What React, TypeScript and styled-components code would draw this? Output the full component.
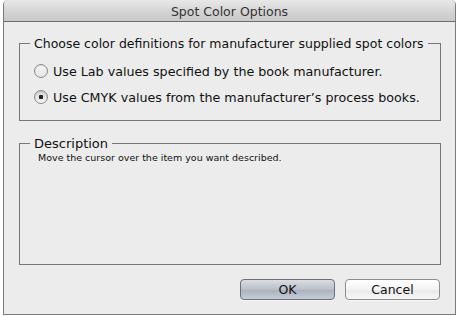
import React from 'react'
import styled, { createGlobalStyle } from 'styled-components'

const GlobalStyle = createGlobalStyle`
  html, body {
    margin: 0;
    padding: 0;
    background: #ffffff;
  }
  body {
    font-family: "DejaVu Sans", "Liberation Sans", sans-serif;
  }
`

const Window = styled.div`
  box-sizing: border-box;
  margin-left: 3px;
  width: 453px;
  height: 315px;
  border: 1px solid #7b7b7b;
  border-top: none;
  border-radius: 5px 5px 0 0;
  background: #ececec;
  display: flex;
  flex-direction: column;
  overflow: hidden;
`

const TitleBar = styled.div`
  height: 22px;
  flex: none;
  box-sizing: border-box;
  border-bottom: 1px solid #6e6e6e;
  background: linear-gradient(#e8e8e8, #d3d3d3 60%, #c9c9c9);
  display: flex;
  align-items: center;
  justify-content: center;
  font-size: 12.5px;
  color: #333333;
  padding-top: 1px;
`

const Body = styled.div`
  flex: 1;
  display: flex;
  flex-direction: column;
  padding: 14px 15px 0 15px;
`

const Group = styled.fieldset<{ $height: number; $top?: number }>`
  box-sizing: border-box;
  margin: 0;
  min-width: 0;
  width: 422px;
  height: ${p => p.$height}px;
  border: 1px solid #777777;
  padding: ${p => p.$top ?? 0}px 0 0 14px;
`

const Legend = styled.legend<{ $size: number }>`
  margin-left: -4px;
  padding: 0 4px;
  white-space: nowrap;
  font-size: ${p => p.$size}px;
  color: #111111;
`

const RadioRow = styled.label`
  display: flex;
  align-items: center;
  gap: 5px;
  height: 26px;
  font-size: 12.7px;
  color: #111111;
`

const RadioCircle = styled.span<{ $checked?: boolean }>`
  box-sizing: border-box;
  width: 14px;
  height: 14px;
  border-radius: 50%;
  border: 1px solid #8a8a8a;
  background: ${p =>
    p.$checked
      ? 'radial-gradient(circle at 50% 50%, #222 0 2px, transparent 2.5px), linear-gradient(#d6d6d6, #f4f4f4)'
      : 'linear-gradient(#f8f8f8, #e4e4e4)'};
  box-shadow: inset 0 1px 1px rgba(0, 0, 0, 0.12);
  flex: none;
`

const Gap = styled.div<{ $h: number }>`
  height: ${p => p.$h}px;
  flex: none;
`

const DescText = styled.div`
  font-size: 9.5px;
  color: #111111;
  margin: 1px 0 0 4px;
`

const Footer = styled.div`
  display: flex;
  justify-content: flex-end;
  gap: 10px;
  margin-top: 14px;
  padding-right: 0;
`

const Button = styled.button<{ $primary?: boolean }>`
  box-sizing: border-box;
  width: 95px;
  height: 21px;
  border-radius: 4px;
  border: 1px solid ${p => (p.$primary ? '#6b6f78' : '#8c8c8c')};
  background: ${p =>
    p.$primary
      ? 'linear-gradient(#d9dde4, #b9bfc9 50%, #aab1bc 51%, #c6ccd5)'
      : 'linear-gradient(#ffffff, #f3f3f3 50%, #e9e9e9 51%, #f7f7f7)'};
  font-family: "DejaVu Sans", "Liberation Sans", sans-serif;
  font-size: 12.5px;
  color: #111111;
  padding: 0;
  box-shadow: 0 1px 0 rgba(255, 255, 255, 0.6);
`

export default function App() {
  return (
    <>
      <GlobalStyle />
      <Window>
        <TitleBar>Spot Color Options</TitleBar>
        <Body>
          <Group $height={85} $top={7}>
            <Legend $size={12.5}>Choose color definitions for manufacturer supplied spot colors</Legend>
            <RadioRow>
              <RadioCircle />
              Use Lab values specified by the book manufacturer.
            </RadioRow>
            <RadioRow>
              <RadioCircle $checked />
              Use CMYK values from the manufacturer’s process books.
            </RadioRow>
          </Group>
          <Gap $h={15} />
          <Group $height={129}>
            <Legend $size={13}>Description</Legend>
            <DescText>Move the cursor over the item you want described.</DescText>
          </Group>
          <Footer>
            <Button $primary>OK</Button>
            <Button>Cancel</Button>
          </Footer>
        </Body>
      </Window>
    </>
  )
}
